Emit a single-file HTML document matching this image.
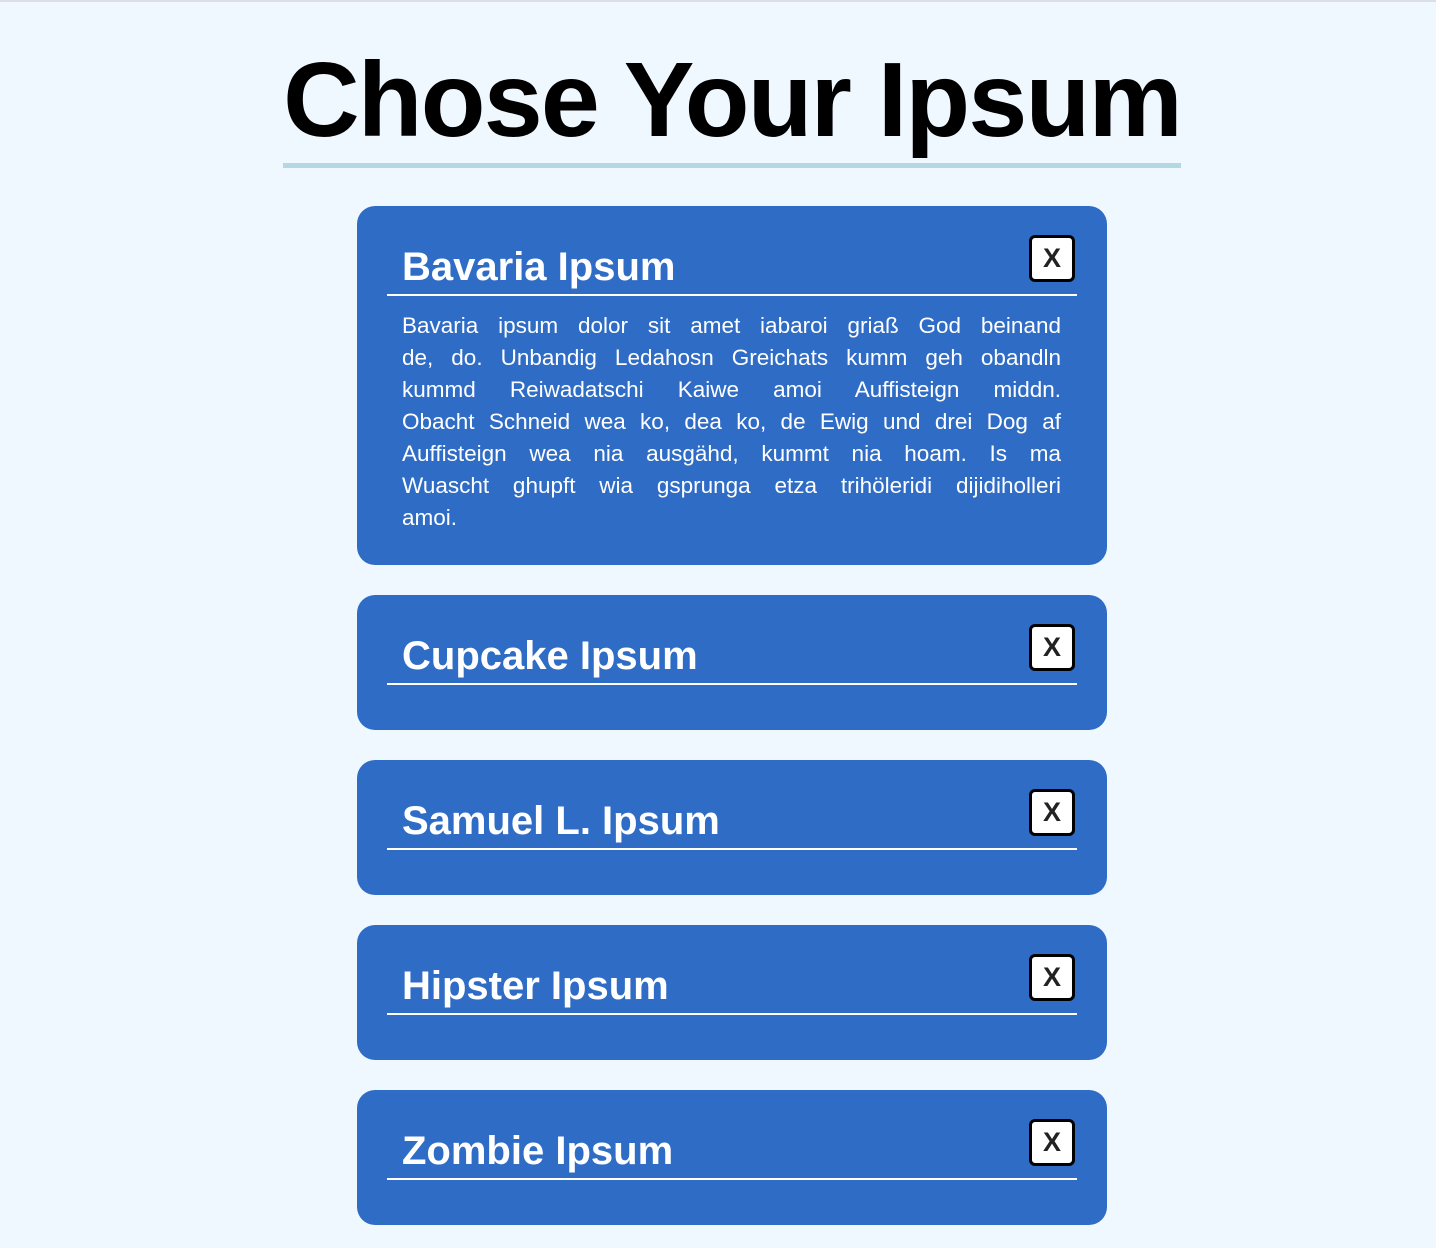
<!DOCTYPE html>
<html><head><meta charset="utf-8"><style>
html,body{margin:0;padding:0}
body{background:#f0f8ff;width:1436px;height:1248px;overflow:hidden;font-family:"Liberation Sans",Arial,sans-serif;position:relative}
.topline{position:absolute;top:0;left:0;right:0;height:2px;background:#dcdfe3}
.hwrap{padding-top:40px;padding-left:283px}
h1{display:block;margin:0;font-size:106px;line-height:120px;letter-spacing:-1.8px;font-weight:bold;color:#000;padding:0 0 3px 0;border-bottom:5px solid #b4d7e3;width:898px;text-align:center;white-space:nowrap}
.card{position:relative;width:750px;margin:38px 0 0 357px;background:#2f6cc6;border-radius:18px;color:#fff;padding-bottom:45px}
.card+.card{margin-top:30px}
h2{margin:0 30px;padding:37px 0 3px 15px;font-size:40px;line-height:48px;letter-spacing:0;border-bottom:2px solid #fff;font-weight:bold}
.x{position:absolute;left:672px;top:29px;width:40px;height:41px;background:#fff;border:3px solid #000;border-radius:6px;color:#222;font-weight:bold;font-size:27px;line-height:41px;text-align:center}
.p{margin:14px 46px 0 45px;font-size:22.5px;line-height:32px}
.p div{text-align:justify;text-align-last:justify;white-space:nowrap}
.p div.l{text-align-last:left}
.card.first{padding-bottom:31px}
</style></head><body>
<div class="topline"></div>
<div class="hwrap"><h1>Chose Your Ipsum</h1></div>
<div class="card first" style="margin-top:38px"><h2>Bavaria Ipsum</h2><div class="x">X</div>
<div class="p">
<div>Bavaria ipsum dolor sit amet iabaroi griaß God beinand</div>
<div>de, do. Unbandig Ledahosn Greichats kumm geh obandln</div>
<div>kummd Reiwadatschi Kaiwe amoi Auffisteign middn.</div>
<div>Obacht Schneid wea ko, dea ko, de Ewig und drei Dog af</div>
<div>Auffisteign wea nia ausgähd, kummt nia hoam. Is ma</div>
<div>Wuascht ghupft wia gsprunga etza trihöleridi dijidiholleri</div>
<div class="l">amoi.</div>
</div></div>
<div class="card"><h2>Cupcake Ipsum</h2><div class="x">X</div></div>
<div class="card"><h2>Samuel L. Ipsum</h2><div class="x">X</div></div>
<div class="card"><h2>Hipster Ipsum</h2><div class="x">X</div></div>
<div class="card"><h2>Zombie Ipsum</h2><div class="x">X</div></div>
</body></html>
